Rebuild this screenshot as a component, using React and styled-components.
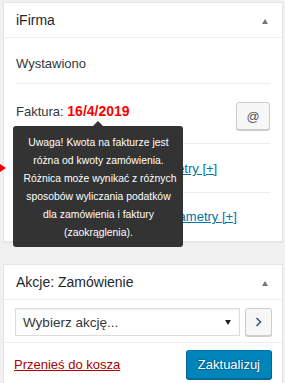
import React from 'react';
import styled, { createGlobalStyle } from 'styled-components';

const GlobalStyle = createGlobalStyle`
  html, body {
    margin: 0;
    padding: 0;
    background: #f1f1f1;
  }
  body {
    font-family: "Liberation Sans", Arial, sans-serif;
    font-size: 13px;
    color: #32373c;
  }
`;

const Page = styled.div`
  padding: 2px 2px 0 3px;
`;

const Panel = styled.div`
  position: relative;
  width: 278px;
  background: #fff;
  border: 1px solid #e5e5e5;
  box-shadow: 0 1px 1px rgba(0, 0, 0, 0.04);
  margin-bottom: 22px;
`;

const PanelHeader = styled.div`
  display: flex;
  align-items: center;
  justify-content: space-between;
  height: 34px;
  padding: 0 14px 0 12px;
  border-bottom: 1px solid #eee;
`;

const PanelTitle = styled.h2`
  margin: 0;
  font-size: 14px;
  font-weight: 400;
  line-height: 18px;
  color: #23282d;
`;

const Toggle = styled.span`
  width: 0;
  height: 0;
  margin-top: 2px;
  border-left: 3.5px solid transparent;
  border-right: 3.5px solid transparent;
  border-bottom: 5px solid #72777c;
`;

const PanelBody = styled.div`
  padding: ${(p) => p.$pad || '0 12px'};
`;

const Row = styled.div`
  position: relative;
  display: flex;
  align-items: flex-start;
  justify-content: space-between;
  padding: ${(p) => p.$pad};
  line-height: 18px;
  border-bottom: ${(p) => (p.$last ? 'none' : '1px solid #eee')};
`;

const Label = styled.span`
  font-size: 13px;
`;

const DateValue = styled.span`
  position: relative;
  display: inline-block;
  font-size: 14px;
  font-weight: 700;
  color: #f00;
`;

const Tooltip = styled.div`
  position: absolute;
  top: calc(100% + 6px);
  left: 50%;
  transform: translateX(-50%);
  width: 150px;
  padding: 8px 10px 5px;
  background: #333;
  border-radius: 3px;
  color: #fff;
  font-size: 10.4px;
  font-weight: 400;
  line-height: 18px;
  text-align: center;
  white-space: nowrap;
  z-index: 5;

  &::before {
    content: '';
    position: absolute;
    top: -5px;
    left: 50%;
    margin-left: -5px;
    border-left: 5px solid transparent;
    border-right: 5px solid transparent;
    border-bottom: 5px solid #333;
  }
`;

const IconButton = styled.button`
  display: flex;
  align-items: center;
  justify-content: center;
  box-sizing: border-box;
  width: ${(p) => p.$w || 34}px;
  height: 28px;
  padding: 0;
  background: #f7f7f7;
  border: 1px solid #ccc;
  border-radius: 3px;
  box-shadow: 0 1px 0 #ccc;
  color: #555;
  font-family: inherit;
  font-size: 13px;
`;

const Link = styled.a`
  color: ${(p) => (p.$danger ? '#a00' : '#0073aa')};
  text-decoration: underline;
  font-size: 13px;
  line-height: 18px;
  cursor: pointer;
`;

const Marker = styled.span`
  position: absolute;
  left: -16px;
  top: 20px;
  width: 0;
  height: 0;
  border-top: 4.5px solid transparent;
  border-bottom: 4.5px solid transparent;
  border-left: 6px solid #e00;
`;

const ActionRow = styled.div`
  display: flex;
  align-items: flex-start;
  gap: 5px;
  padding: 8px 10px 6px 11px;
  border-bottom: 1px solid #eee;
`;

const SelectBox = styled.div`
  display: flex;
  align-items: center;
  justify-content: space-between;
  box-sizing: border-box;
  width: 226px;
  height: 28px;
  padding: 0 8px 0 7px;
  border: 1px solid #ddd;
  box-shadow: inset 0 1px 2px rgba(0, 0, 0, 0.07);
  font-size: 13.5px;
  color: #32373c;
`;

const Caret = styled.span`
  width: 0;
  height: 0;
  border-left: 3.5px solid transparent;
  border-right: 3.5px solid transparent;
  border-top: 5px solid #222;
`;

const Footer = styled.div`
  display: flex;
  align-items: center;
  justify-content: space-between;
  padding: 7px 10px 4px;
`;

const PrimaryButton = styled.button`
  box-sizing: border-box;
  height: 29px;
  padding: 0 11px;
  background: #0085ba;
  border: 1px solid #0073aa;
  border-color: #0073aa #006799 #006799;
  border-radius: 3px;
  box-shadow: 0 1px 0 #006799;
  color: #fff;
  font-family: inherit;
  font-size: 13px;
  text-shadow: 0 -1px 1px #006799, 1px 0 1px #006799, 0 1px 1px #006799, -1px 0 1px #006799;
`;

function Chevron() {
  return (
    <svg width="7" height="10" viewBox="0 0 7 10">
      <path d="M1.5 1 L5.5 5 L1.5 9" fill="none" stroke="#3c5a7a" strokeWidth="1.6" />
    </svg>
  );
}

function App() {
  return (
    <Page>
      <GlobalStyle />
      <Panel>
        <PanelHeader>
          <PanelTitle>iFirma</PanelTitle>
          <Toggle />
        </PanelHeader>
        <PanelBody>
          <Row $pad="17px 0 10px">
            <Label>Wystawiono</Label>
          </Row>
          <Row $pad="18px 0 13px">
            <Label>
              Faktura:{' '}
              <DateValue>
                16/4/2019
                <Tooltip>
                  Uwaga! Kwota na fakturze jest
                  <br />
                  różna od kwoty zamówienia.
                  <br />
                  Różnica może wynikać z różnych
                  <br />
                  sposobów wyliczania podatków
                  <br />
                  dla zamówienia i faktury
                  <br />
                  (zaokrąglenia).
                </Tooltip>
              </DateValue>
            </Label>
            <IconButton>@</IconButton>
          </Row>
          <Row $pad="16px 0 14px">
            <Marker />
            <Link>Edytuj dane korekty i parametry [+]</Link>
          </Row>
          <Row $pad="15px 0 15px" $last>
            <Link>Edytuj dane faktury oraz parametry [+]</Link>
          </Row>
        </PanelBody>
      </Panel>
      <Panel>
        <PanelHeader>
          <PanelTitle>Akcje: Zamówienie</PanelTitle>
          <Toggle />
        </PanelHeader>
        <ActionRow>
          <SelectBox>
            <span>Wybierz akcję...</span>
            <Caret />
          </SelectBox>
          <IconButton $w={27}>
            <Chevron />
          </IconButton>
        </ActionRow>
        <Footer>
          <Link $danger>Przenieś do kosza</Link>
          <PrimaryButton>Zaktualizuj</PrimaryButton>
        </Footer>
      </Panel>
    </Page>
  );
}

export default App;
